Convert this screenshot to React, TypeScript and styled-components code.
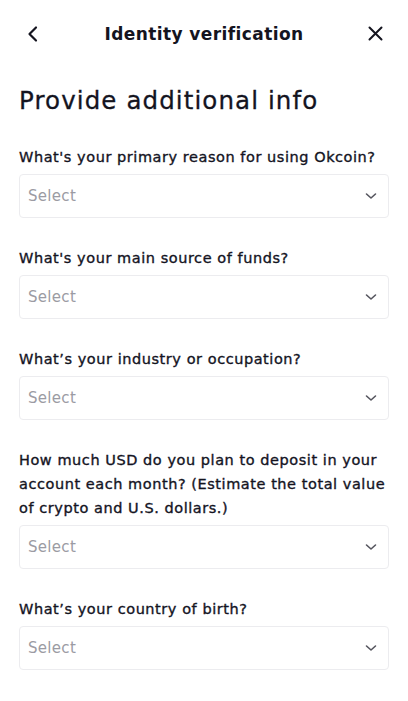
import * as React from 'react';
import styled, { createGlobalStyle } from 'styled-components';

const GlobalStyle = createGlobalStyle`
    html, body {
        margin: 0;
        padding: 0;
        background: #fff;
    }
    * {
        box-sizing: border-box;
    }
`

const Page = styled.div`
    width: 408px;
    min-height: 701px;
    padding: 0 19px;
    font-family: 'DejaVu Sans', sans-serif;
    color: #14141f;
    background: #fff;
`

const TopBar = styled.header`
    height: 68px;
    display: flex;
    align-items: center;
    justify-content: space-between;
`

const IconButton = styled.button`
    width: 24px;
    height: 24px;
    border: 0;
    padding: 0;
    background: transparent;
    display: flex;
    align-items: center;
    justify-content: center;
    color: #14141f;
    cursor: pointer;
`

const Title = styled.h1`
    margin: 0;
    font-size: 17px;
    font-weight: 700;
    letter-spacing: 0.4px;
`

const Heading = styled.h2`
    margin: 17px 0 0;
    font-size: 24.5px;
    line-height: 32px;
    font-weight: 400;
    letter-spacing: 1.1px;
    -webkit-text-stroke: 0.3px currentColor;
`

const Form = styled.div`
    display: flex;
    flex-direction: column;
    gap: 28px;
    margin-top: 28px;
`

const Field = styled.label`
    display: flex;
    flex-direction: column;
    gap: 5px;
`

const Question = styled.span`
    font-size: 14.5px;
    line-height: 24px;
    font-weight: 400;
    letter-spacing: 0.55px;
    -webkit-text-stroke: 0.35px currentColor;
`

const SelectBox = styled.div`
    height: 44px;
    border: 1px solid #ececef;
    border-radius: 4px;
    padding: 0 11px 0 8px;
    display: flex;
    align-items: center;
    justify-content: space-between;
    font-size: 15px;
    letter-spacing: 0.3px;
    color: #9b9ba3;
`

const Chevron = () => (
    <svg width="12" height="8" viewBox="0 0 12 8" fill="none">
        <path d="M1.5 2l4.5 4 4.5-4" stroke="#55555e" strokeWidth="1.6" strokeLinecap="round" strokeLinejoin="round" />
    </svg>
)

const questions = [
    "What's your primary reason for using Okcoin?",
    "What's your main source of funds?",
    "What’s your industry or occupation?",
    "How much USD do you plan to deposit in your account each month? (Estimate the total value of crypto and U.S. dollars.)",
    "What’s your country of birth?",
]

export default function App() {
    return (
        <Page>
            <GlobalStyle />
            <TopBar>
                <IconButton aria-label="Back">
                    <svg width="24" height="24" viewBox="0 0 24 24" fill="none">
                        <path d="M17 5.5L10.5 12l6.5 6.5" stroke="currentColor" strokeWidth="2.2" strokeLinecap="round" strokeLinejoin="round" />
                    </svg>
                </IconButton>
                <Title>Identity verification</Title>
                <IconButton aria-label="Close">
                    <svg width="24" height="24" viewBox="0 0 24 24" fill="none">
                        <path d="M4.5 5.5l12 12M16.5 5.5l-12 12" stroke="currentColor" strokeWidth="2" strokeLinecap="round" />
                    </svg>
                </IconButton>
            </TopBar>
            <Heading>Provide additional info</Heading>
            <Form>
                {questions.map((q) => (
                    <Field key={q}>
                        <Question>{q}</Question>
                        <SelectBox>
                            Select
                            <Chevron />
                        </SelectBox>
                    </Field>
                ))}
            </Form>
        </Page>
    );
}
